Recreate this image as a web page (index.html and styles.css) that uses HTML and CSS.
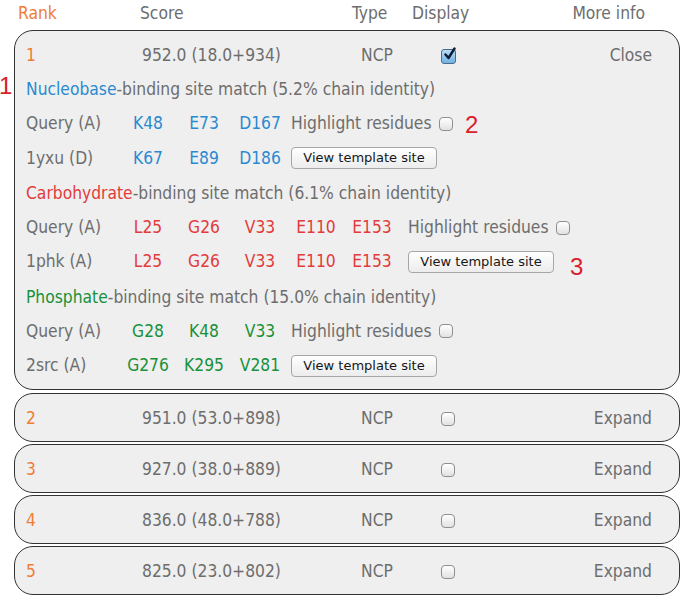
FILE: index.html
```html
<!DOCTYPE html>
<html>
<head>
<meta charset="utf-8">
<link rel="stylesheet" href="styles.css">
</head>
<body>
<div class="page">
  <div class="head">
    <span class="h-rank">Rank</span>
    <span class="h-score">Score</span>
    <span class="h-type">Type</span>
    <span class="h-disp">Display</span>
    <span class="h-more">More info</span>
  </div>

  <div class="card open">
    <div class="row">
      <span class="rank">1</span>
      <span class="score">952.0 (18.0+934)</span>
      <span class="type">NCP</span>
      <span class="disp"><span class="cb checked"><svg viewBox="0 0 15 15" width="15" height="15"><path d="M3.5 7.5 L6.5 11 L12.5 1.5" fill="none" stroke="#111a33" stroke-width="2.4" stroke-linecap="round" stroke-linejoin="round"/></svg></span></span>
      <span class="more">Close</span>
    </div>

    <div class="line"><span class="blue">Nucleobase</span>-binding site match (5.2% chain identity)</div>
    <div class="res">
      <span class="lab">Query (A)</span>
      <span class="r blue">K48</span><span class="r blue">E73</span><span class="r blue">D167</span>
      <span class="hl">Highlight residues <span class="cb"></span></span>
    </div>
    <div class="res">
      <span class="lab">1yxu (D)</span>
      <span class="r blue">K67</span><span class="r blue">E89</span><span class="r blue">D186</span>
      <span class="hl"><button class="btn">View template site</button></span>
    </div>

    <div class="line"><span class="red">Carbohydrate</span>-binding site match (6.1% chain identity)</div>
    <div class="res">
      <span class="lab">Query (A)</span>
      <span class="r red">L25</span><span class="r red">G26</span><span class="r red">V33</span><span class="r red">E110</span><span class="r red">E153</span>
      <span class="hl wide">Highlight residues <span class="cb"></span></span>
    </div>
    <div class="res">
      <span class="lab">1phk (A)</span>
      <span class="r red">L25</span><span class="r red">G26</span><span class="r red">V33</span><span class="r red">E110</span><span class="r red">E153</span>
      <span class="hl wide"><button class="btn">View template site</button></span>
    </div>

    <div class="line"><span class="green">Phosphate</span>-binding site match (15.0% chain identity)</div>
    <div class="res">
      <span class="lab">Query (A)</span>
      <span class="r green">G28</span><span class="r green">K48</span><span class="r green">V33</span>
      <span class="hl">Highlight residues <span class="cb"></span></span>
    </div>
    <div class="res">
      <span class="lab">2src (A)</span>
      <span class="r green">G276</span><span class="r green">K295</span><span class="r green">V281</span>
      <span class="hl"><button class="btn">View template site</button></span>
    </div>

    <span class="note n1">1</span>
    <span class="note n2">2</span>
    <span class="note n3">3</span>
  </div>

  <div class="card">
    <div class="row">
      <span class="rank">2</span><span class="score">951.0 (53.0+898)</span><span class="type">NCP</span>
      <span class="disp"><span class="cb"></span></span><span class="more">Expand</span>
    </div>
  </div>
  <div class="card">
    <div class="row">
      <span class="rank">3</span><span class="score">927.0 (38.0+889)</span><span class="type">NCP</span>
      <span class="disp"><span class="cb"></span></span><span class="more">Expand</span>
    </div>
  </div>
  <div class="card">
    <div class="row">
      <span class="rank">4</span><span class="score">836.0 (48.0+788)</span><span class="type">NCP</span>
      <span class="disp"><span class="cb"></span></span><span class="more">Expand</span>
    </div>
  </div>
  <div class="card">
    <div class="row">
      <span class="rank">5</span><span class="score">825.0 (23.0+802)</span><span class="type">NCP</span>
      <span class="disp"><span class="cb"></span></span><span class="more">Expand</span>
    </div>
  </div>
</div>
</body>
</html>
```

FILE: styles.css
```css
html, body {
  margin: 0;
  padding: 0;
  background: #ffffff;
}
body {
  font-family: "DejaVu Sans Condensed", "DejaVu Sans", sans-serif;
  font-size: 17.3px;
  color: #6d6d6d;
}
.page {
  width: 683px;
  padding: 0 3px 0 14px;
  box-sizing: border-box;
}
.head {
  display: grid;
  grid-template-columns: 122px 212px 60px 1fr auto;
  height: 28px;
  line-height: 26px;
  margin-bottom: 2px;
  padding-left: 4px;
  padding-right: 35px;
}
.h-rank { color: #f07d35; }
.card {
  position: relative;
  background: #efefef;
  border: 1px solid #333333;
  border-radius: 19px;
  padding: 6px 27px 6px 11px;
  margin-bottom: 2px;
}
.card.open { margin-bottom: 3px; }
.row {
  display: grid;
  grid-template-columns: 116px 219px 80px 1fr auto;
  height: 35px;
  line-height: 37px;
  align-items: center;
}
.rank { color: #f07d35; }
.disp { display: flex; align-items: center; padding-top: 1px; }
.line, .res {
  height: 34.6px;
  line-height: 35.6px;
  white-space: nowrap;
}
.res {
  display: flex;
  align-items: center;
}
.lab { width: 94px; }
.r { width: 56px; text-align: center; }
.hl { margin-left: 3px; display: flex; align-items: center; gap: 7px; }
.hl.wide { margin-left: 8px; }
.blue { color: #2a8ad0; }
.red { color: #e23b3b; }
.green { color: #17913a; }
.cb {
  display: inline-block;
  width: 14px;
  height: 14px;
  box-sizing: border-box;
  border: 1px solid #8f8f8f;
  border-radius: 4px;
  background: linear-gradient(#ffffff, #e2e2e2);
  position: relative;
}
.cb.checked {
  border-color: #4a6a8a;
  border-radius: 3px;
  background: linear-gradient(#b9dcf5, #6fb2e4);
  width: 15px;
  height: 15px;
}
.cb.checked svg {
  position: absolute;
  left: 0;
  top: -3px;
}
.btn {
  font-family: "DejaVu Sans", sans-serif;
  font-size: 13px;
  color: #161616;
  height: 22px;
  width: 146px;
  padding: 0;
  border: 1px solid #a6a6a6;
  border-radius: 4px;
  background: linear-gradient(#ffffff, #ececec);
  line-height: 20px;
}
.note {
  position: absolute;
  font-family: "Liberation Sans", sans-serif;
  color: #d9202c;
  font-size: 24px;
  line-height: 24px;
}
.n1 { left: -16px; top: 43px; }
.n2 { left: 450px; top: 82px; }
.n3 { left: 555px; top: 224px; }
```
